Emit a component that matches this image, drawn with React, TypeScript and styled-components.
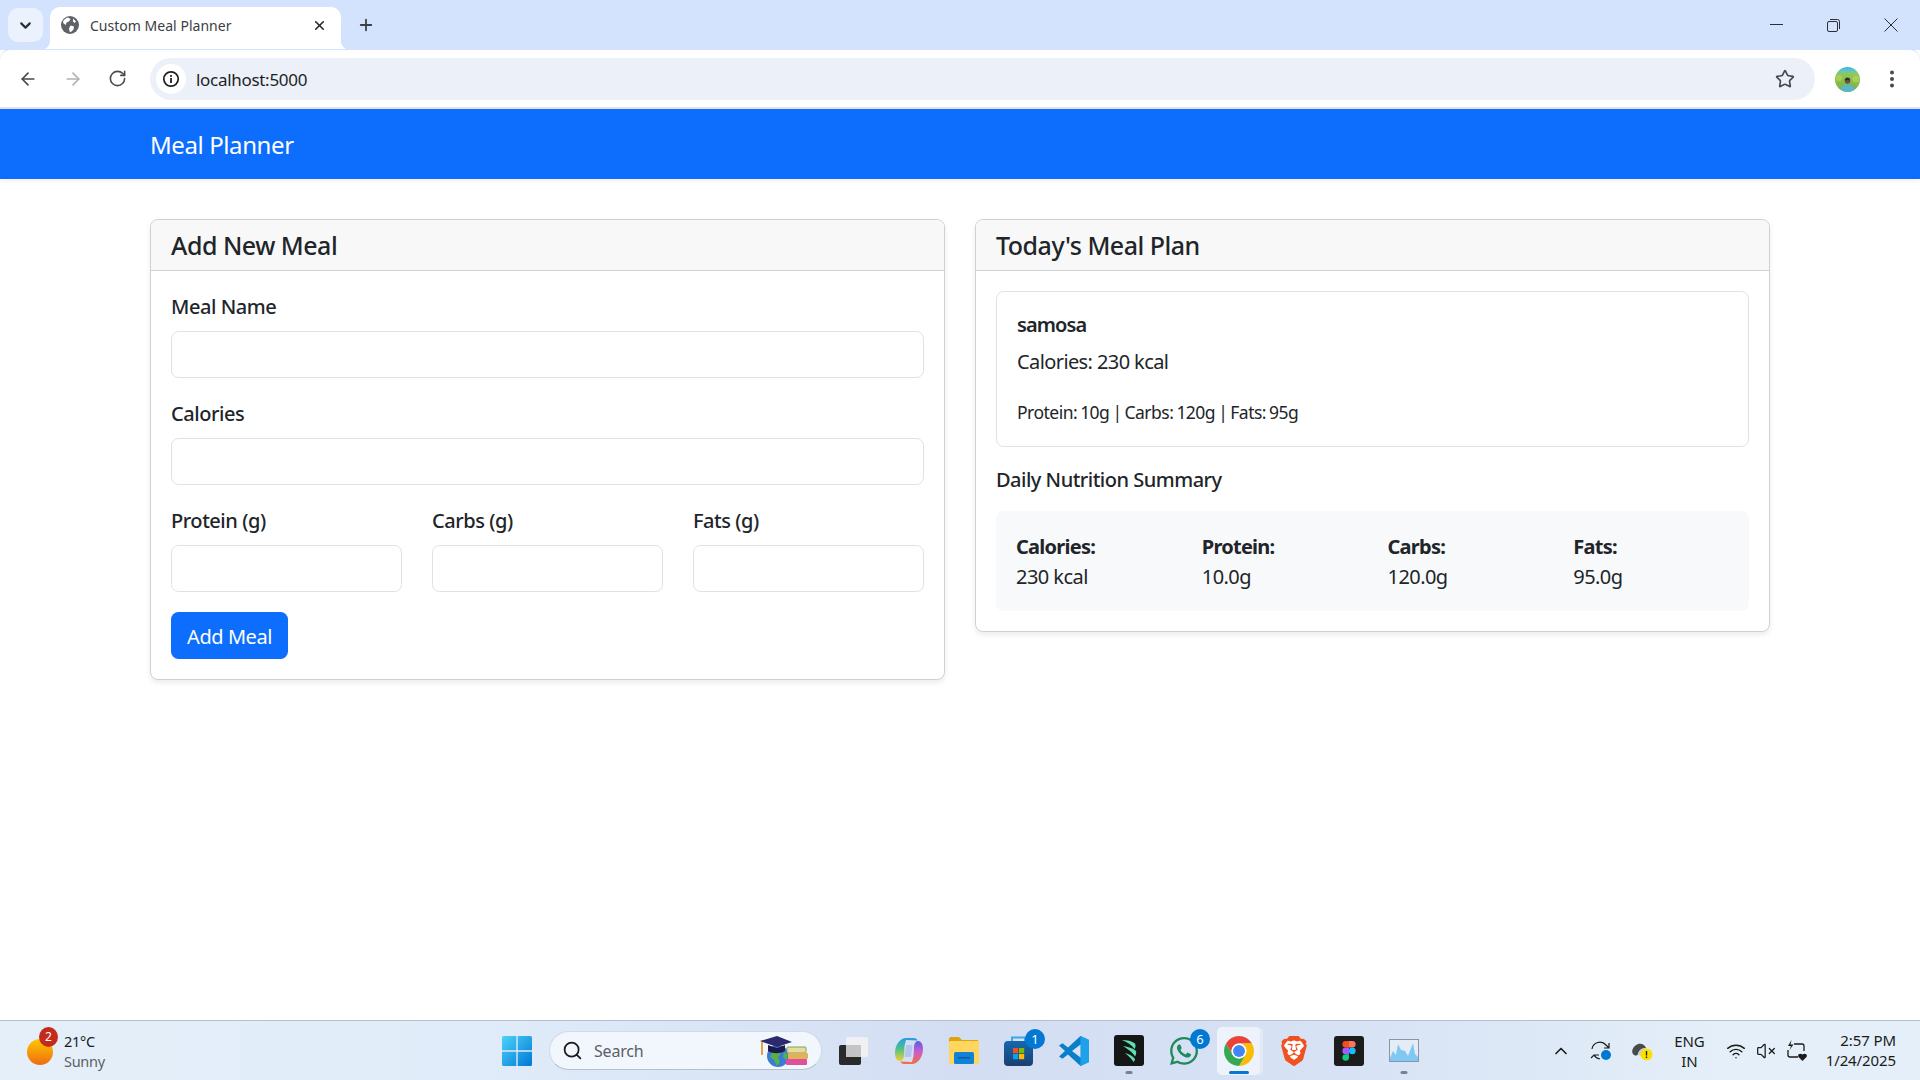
import React from "react";
import styled, { createGlobalStyle } from "styled-components";
import {
  ArrowLeft, ArrowRight, RotateCw, X, Plus, Star, ChevronDown, ChevronUp, Search, Wifi, VolumeX,
} from "lucide-react";
import { FaWhatsapp } from "react-icons/fa";
import { SiBrave } from "react-icons/si";

const FONT = `"Noto Sans", "Open Sans", sans-serif`;

const Global = createGlobalStyle`
  html, body { margin: 0; padding: 0; height: 100%; overflow: hidden; background: #fff; }
  #root { height: 100%; }
  * { box-sizing: border-box; }
  body { font-family: ${FONT}; color: #212529; }
`;

const Screen = styled.div`
  width: 1920px; height: 1080px; display: flex; flex-direction: column; overflow: hidden; background: #fff;
`;

/* ---------- browser chrome ---------- */
const TabStrip = styled.div`
  height: 50px; flex: none; display: flex; align-items: flex-end; background: #d3e3fd; padding-left: 8px;
`;
const TabListButton = styled.div`
  width: 35px; height: 34px; margin-bottom: 8px; border-radius: 10px; background: #ecf2fd; color: #2b2f33;
  display: flex; align-items: center; justify-content: center;
`;
const Tab = styled.div`
  position: relative; width: 291px; height: 43px; margin-left: 7px; background: #fff;
  border-radius: 10px 10px 0 0; display: flex; align-items: center; padding: 0 12px 7px 11px;
  &::before, &::after { content: ""; position: absolute; bottom: 0; width: 10px; height: 10px; }
  &::before { left: -10px; background: radial-gradient(circle at 0 0, transparent 10px, #fff 10.5px); }
  &::after { right: -10px; background: radial-gradient(circle at 100% 0, transparent 10px, #fff 10.5px); }
`;
const TabTitle = styled.span`
  flex: 1; margin-left: 11px; font-size: 14px; letter-spacing: 0.02px; color: #3c4043; white-space: nowrap;
`;
const TabClose = styled.span`display: flex; color: #26292c; margin-right: 2px;`;
const NewTab = styled.span`display: flex; margin: 0 0 8px 16px; height: 34px; align-items: center; color: #3c4043;`;
const WindowControls = styled.div`
  margin-left: auto; height: 50px; display: flex; align-items: center; padding-right: 22px; gap: 44px; color: #2b2f33;
`;
const Toolbar = styled.div`
  height: 59px; flex: none; background: #fff; border-radius: 10px 10px 0 0; border-bottom: 2px solid #e1e3e6;
  display: flex; align-items: center; padding: 1px 25px 0 18px; position: relative;
  box-shadow: 0 -1px 0 #d3e3fd;
`;
const NavIcons = styled.div`display: flex; gap: 25px; color: #474b4f; margin-right: 23px;`;
const Omnibox = styled.div`
  flex: 1; height: 42px; border-radius: 21px; background: #ebf0f9; display: flex; align-items: center; padding: 0 20px 0 6px;
`;
const InfoChip = styled.span`
  width: 30px; height: 30px; border-radius: 50%; background: #fff; display: flex; align-items: center; justify-content: center;
`;
const UrlText = styled.span`
  margin-left: 10px; font-size: 17px; letter-spacing: -0.3px; color: #1f1f1f; flex: 1;
`;
const ProfileArea = styled.div`display: flex; align-items: center; margin-left: 20px; gap: 29px;`;

/* ---------- app ---------- */
const Navbar = styled.nav`
  height: 70px; flex: none; background: #0d6efd; display: flex; align-items: center; padding: 0 150px;
  box-shadow: 0 2px 5px rgba(0,0,0,.06);
`;
const Brand = styled.span`font-size: 24px; color: #fff; letter-spacing: -0.4px;`;
const Main = styled.main`
  flex: 1; min-height: 0; padding: 40px 150px 0; display: grid; grid-template-columns: 1fr 1fr; gap: 30px; align-items: start;
`;
const Card = styled.section`
  border: 1px solid #cfd1d3; border-radius: 8px; background: #fff; box-shadow: 0 2.5px 5px rgba(0,0,0,.075); overflow: hidden;
`;
const CardHeader = styled.header`
  height: 51px; padding: 0 20px; background: #f8f8f8; border-bottom: 1px solid #cfd1d3; display: flex; align-items: center;
`;
const CardTitle = styled.h5`
  margin: 0; font-size: 25px; font-weight: 500; line-height: 30px; letter-spacing: -0.5px; color: #212529;
`;
const CardBody = styled.div`padding: 20px;`;
const Field = styled.div`margin-bottom: 20px;`;
const Label = styled.label`
  display: block; font-size: 20px; font-weight: 500; line-height: 30px; padding-top: 1px; height: 31px; margin-bottom: 9px; letter-spacing: -0.45px;
`;
const TextInput = styled.input`
  display: block; width: 100%; height: 47px; border: 1px solid #dee2e6; border-radius: 7.5px; background: #fff; padding: 0 15px; outline: none;
`;
const TripleRow = styled.div`display: grid; grid-template-columns: repeat(3, 1fr); gap: 30px; margin-bottom: 20px;`;
const PrimaryButton = styled.button`
  display: block; height: 47px; width: 117px; padding: 2px 0 0; border: 0; border-radius: 7.5px; background: #0d6efd; color: #fff;
  font-family: ${FONT}; font-size: 20px; letter-spacing: -0.45px;
`;
const MealItem = styled.article`
  border: 1px solid #dee2e6; border-radius: 7.5px; padding: 21px 20px 19px; margin-bottom: 20px;
`;
const MealName = styled.h6`margin: 0 0 10px; font-size: 20px; font-weight: 600; line-height: 24px; letter-spacing: -0.9px;`;
const MealLine = styled.p`margin: 0 0 20px; font-size: 20px; line-height: 30px; letter-spacing: -0.6px;`;
const MealMacros = styled.p`margin: 0; font-size: 17.5px; line-height: 30px; letter-spacing: -0.52px; word-spacing: -1px;`;
const SummaryTitle = styled.h6`margin: 0 0 20px; padding-top: 1px; height: 24px; font-size: 20px; font-weight: 500; line-height: 24px; letter-spacing: -0.5px;`;
const SummaryBox = styled.div`
  background: #f8f9fa; border-radius: 7.5px; padding: 21px 20px 19px; display: grid; grid-template-columns: repeat(4, 1fr); gap: 30px;
`;
const Stat = styled.div`font-size: 20px; line-height: 30px; letter-spacing: -0.55px;`;
const StatLabel = styled.strong`display: block; font-weight: 700; letter-spacing: -0.75px;`;

/* ---------- taskbar ---------- */
const Taskbar = styled.footer`
  height: 60px; flex: none; border-top: 1px solid #b6bfd0; display: flex; align-items: center; position: relative;
  background: linear-gradient(90deg, #e4eff9 0%, #e0ecf9 25%, #d3def3 50%, #d7e2f5 70%, #e4eff9 90%, #e4eff9 100%);
`;
const Weather = styled.div`width: 502px; flex: none; display: flex; align-items: center; padding-left: 27px;`;
const WeatherIcon = styled.div`position: relative; width: 26px; height: 26px; margin-top: 2px;`;
const WeatherBadge = styled.span`
  position: absolute; top: -12px; right: -5px; width: 19px; height: 20px; border-radius: 50%; background: #c42b1c; color: #fff;
  font-size: 12px; line-height: 20px; text-align: center;
`;
const WeatherText = styled.div`margin-left: 11px; font-size: 14.5px; line-height: 20px; color: #1b1b1b; letter-spacing: -0.3px;`;
const WeatherSub = styled.div`color: #5b5f66;`;
const StartCell = styled.div`width: 47px; flex: none; display: flex;`;
const SearchBox = styled.div`
  width: 273px; height: 39px; flex: none; border-radius: 20px; background: #f2f6fd; border: 1px solid #d3d9e6; border-bottom-color: #b6bfd0;
  display: flex; align-items: center; padding: 0 13px 0 12px; color: #1b1b1b;
`;
const SearchLabel = styled.span`flex: 1; margin-left: 11px; font-size: 16px; color: #5b5f66; letter-spacing: -0.2px;`;
const TaskIcons = styled.div`display: flex; margin-left: 4px;`;
const TaskCell = styled.div<{ $active?: boolean }>`
  position: relative; width: 55px; height: 48px; display: flex; align-items: center; justify-content: center;
  ${(p) => p.$active && `&::before { content: ""; position: absolute; left: 6px; top: 0; width: 43px; height: 48px; border-radius: 5px; background: #edf2fb; box-shadow: 3px 0 0 #e3e9f6; }`}
  & > * { position: relative; }
`;
const Running = styled.span<{ $active?: boolean }>`
  position: absolute; bottom: 1px; left: 50%; transform: translateX(-50%); height: 3px; border-radius: 2px;
  width: ${(p) => (p.$active ? 20 : 7)}px; background: ${(p) => (p.$active ? "#0078d4" : "#7d828a")};
`;
const Badge = styled.span`
  position: absolute !important; top: 2px; right: 1px; width: 20px; height: 20px; border-radius: 50%; background: #0078d4; color: #fff;
  font-size: 13px; line-height: 20px; text-align: center;
`;
const Tray = styled.div`
  margin-left: auto; display: flex; align-items: center; color: #1b1b1b; padding-right: 24px;
`;
const TrayIcons = styled.div`display: flex; align-items: center; gap: 19px; margin-right: 21.5px;`;
const TrayStatus = styled.div`display: flex; align-items: center; gap: 10px; margin: 0 19px 0 21px;`;
const Lang = styled.div`font-size: 15px; line-height: 20px; text-align: center; letter-spacing: -0.1px;`;
const Clock = styled.div`font-size: 15px; line-height: 20px; text-align: right; letter-spacing: -0.1px; margin-top: -1px;`;

/* ---------- drawn icons ---------- */
const Globe = () => (
  <svg width="18" height="18" viewBox="0 0 18 18">
    <circle cx="9" cy="9" r="9" fill="#5f6368" />
    <path d="M7 1.500 9.500 3 8 5.500 5.500 6.500 5 9 2.500 7.500 2 5.500C3 3.500 5 2 7 1.500ZM9.500 9.500 13 10.500 12.500 13.500 10 16 8.500 15.500 8 12.500ZM12 2.500l3 3-1.500 1.500L12 5.500Z" fill="#fff" />
  </svg>
);
const InfoGlyph = () => (
  <svg width="18" height="18" viewBox="0 0 18 18" fill="none">
    <circle cx="9" cy="9" r="7.200" stroke="#1f1f1f" strokeWidth="1.700" />
    <rect x="8.100" y="8" width="1.800" height="5" fill="#1f1f1f" />
    <rect x="8.100" y="5" width="1.800" height="1.800" fill="#1f1f1f" />
  </svg>
);
const Minimize = () => <svg width="13" height="13" viewBox="0 0 13 13"><path d="M0 5.500h13" stroke="#2b2f33" strokeWidth="1" /></svg>;
const Restore = () => (
  <svg width="13" height="13" viewBox="0 0 13 13" fill="none" stroke="#2b2f33">
    <rect x=".500" y="2.500" width="10" height="10" rx="1.500" />
    <path d="M3 .500h7.500a2 2 0 0 1 2 2V10" />
  </svg>
);
const CloseWin = () => <svg width="14" height="14" viewBox="0 0 14 14"><path d="M.500.500l13 13M13.500.500l-13 13" stroke="#2b2f33" /></svg>;
const Kebab = () => (
  <svg width="6" height="18" viewBox="0 0 6 18" fill="#474b4f">
    <circle cx="3" cy="2.500" r="2" /><circle cx="3" cy="9" r="2" /><circle cx="3" cy="15.500" r="2" />
  </svg>
);
const Avatar = () => (
  <svg width="25" height="25" viewBox="0 0 25 25">
    <defs>
      <clipPath id="av"><circle cx="12.500" cy="12.500" r="12.500" /></clipPath>
      <linearGradient id="avg" x1="0" y1="0" x2="0" y2="1"><stop offset="0" stopColor="#3fb4ea" /><stop offset=".18" stopColor="#6cc6b4" /><stop offset=".3" stopColor="#93c84e" /><stop offset="1" stopColor="#79ad42" /></linearGradient>
    </defs>
    <g clipPath="url(#av)">
      <rect width="25" height="25" fill="url(#avg)" />
      <circle cx="4" cy="11" r="3" fill="#a9cf5a" /><circle cx="21" cy="12" r="3.500" fill="#a9cf5a" />
      <path d="M5 25c.500-5 3-7.500 7.500-7.500s7.500 2.500 8 7.500Z" fill="#5cb6c8" />
      <circle cx="12.500" cy="14" r="2.700" fill="#6b4f3f" />
      <path d="M9.700 13.500c0-2 1.300-3 2.800-3s2.800 1 2.800 3c-1.800-.800-3.800-.800-5.600 0Z" fill="#26303a" />
    </g>
  </svg>
);
const WeatherSun = () => (
  <svg width="26" height="26" viewBox="0 0 26 26">
    <defs><linearGradient id="sun" x1="0" y1="0" x2="0" y2="1"><stop offset="0" stopColor="#ffc800" /><stop offset="1" stopColor="#ee6c10" /></linearGradient></defs>
    <circle cx="13" cy="13" r="13" fill="url(#sun)" />
  </svg>
);
const WinLogo = () => (
  <svg width="30" height="30" viewBox="0 0 30 30">
    <defs><linearGradient id="win" x1="0" y1="0" x2="1" y2="1"><stop offset="0" stopColor="#4ed2fa" /><stop offset="1" stopColor="#0078d4" /></linearGradient></defs>
    <path d="M0 1.500A1.500 1.500 0 0 1 1.500 0h12.800v14.300H0ZM15.700 0h12.800A1.500 1.500 0 0 1 30 1.500v12.800H15.700ZM0 15.700h14.300V30H1.500A1.500 1.500 0 0 1 0 28.500ZM15.700 15.700H30v12.800a1.500 1.500 0 0 1-1.500 1.500H15.700Z" fill="url(#win)" />
  </svg>
);
const EduIcon = () => (
  <svg width="48" height="36" viewBox="0 0 48 36">
    <circle cx="18" cy="23" r="11" fill="#3b7bd8" />
    <path d="M13 17l6-1 2 4-3 4 2 5-3 4-3-6-4-3ZM24 19l4 3-2 5-3-3Z" fill="#58b04a" />
    <path d="M8 12v6c5 3 12 3 17 0v-6l-8 3Z" fill="#1c1a4a" />
    <path d="M0 8 17 3 32 9 17 14Z" fill="#2c2a6c" />
    <path d="M2 9v13" stroke="#e8a33a" strokeWidth="2" />
    <rect x="27" y="14" width="19" height="6" rx="1" fill="#eadb9a" stroke="#7aa36a" />
    <rect x="28" y="20" width="20" height="6" rx="1" fill="#e0b25a" />
    <rect x="26" y="26" width="21" height="6" rx="1" fill="#e04f9a" />
  </svg>
);
const TaskView = () => (
  <svg width="29" height="28" viewBox="0 0 29 28">
    <rect x="0" y="8" width="22" height="20" rx="2" fill="#2a2a2a" />
    <rect x="7" y="0" width="22" height="20" rx="2" fill="#f0f0f2" />
    <rect x="7" y="8" width="15" height="12" fill="#c4c4c6" />
  </svg>
);
const Copilot = () => (
  <svg width="28" height="28" viewBox="0 0 28 28">
    <defs>
      <linearGradient id="cpa" x1="0" y1="0" x2="0" y2="1"><stop offset="0" stopColor="#2b9ae8" /><stop offset=".45" stopColor="#49c08a" /><stop offset="1" stopColor="#f4cf30" /></linearGradient>
      <linearGradient id="cpb" x1="0" y1="0" x2="0" y2="1"><stop offset="0" stopColor="#5a5be6" /><stop offset=".45" stopColor="#c75ed0" /><stop offset="1" stopColor="#f4703c" /></linearGradient>
    </defs>
    <path d="M11 1h8c2 0 3 1 3.500 2.500L11 3c-.500 2-1 4-1.500 6L9 19c-.500 3-2 5-4 5-3 0-5-3-5-8C0 8 5 1 11 1Z" fill="url(#cpa)" />
    <path d="M17 27H9c-2 0-3-1-3.500-2.500L17 25c.500-2 1-4 1.500-6L19 9c.500-3 2-5 4-5 3 0 5 3 5 8 0 8-5 15-11 15Z" fill="url(#cpb)" />
    <path d="M11 8h6.500l-1.500 12H9.500Z" fill="#9db6e6" opacity=".6" />
  </svg>
);
const Folder = () => (
  <svg width="30" height="27" viewBox="0 0 30 27">
    <path d="M0 2a2 2 0 0 1 2-2h8l3 3h16v4H0Z" fill="#e0a30e" />
    <rect y="4" width="30" height="23" rx="1.500" fill="#ffd75e" />
    <rect x="5" y="15" width="20" height="12" rx="1.500" fill="#1282d6" />
    <rect x="9" y="20" width="12" height="1.500" fill="#0a5aa0" />
  </svg>
);
const Store = () => (
  <svg width="29" height="30" viewBox="0 0 29 30">
    <defs><linearGradient id="st" x1="0" y1="0" x2="0" y2="1"><stop offset="0" stopColor="#1568b0" /><stop offset="1" stopColor="#1c3f70" /></linearGradient></defs>
    <path d="M8 6V1.500h13V6" fill="none" stroke="#35a9e8" strokeWidth="2" />
    <rect y="5" width="29" height="25" rx="4" fill="url(#st)" />
    <rect x="9" y="12" width="5.200" height="5.200" fill="#f25022" /><rect x="15" y="12" width="5.200" height="5.200" fill="#7fba00" />
    <rect x="9" y="18" width="5.200" height="5.200" fill="#00a4ef" /><rect x="15" y="18" width="5.200" height="5.200" fill="#ffb900" />
  </svg>
);
const VSCode = () => (
  <svg width="30" height="30" viewBox="0 0 30 30">
    <path d="M21.500 0 30 4v22l-8.500 4L9 18.500l-5.500 4.200L0 20.500 6 15 0 9.500l3.500-2.200L9 11.500Z" fill="#0a7fc9" />
    <path d="M21.500 0 30 4v22l-8.500 4Z" fill="#1fa0ea" />
    <path d="M21.500 8.500 13 15l8.500 6.500Z" fill="#d9e3f4" />
  </svg>
);
const DarkApp = () => (
  <svg width="30" height="31" viewBox="0 0 30 31">
    <rect width="30" height="31" rx="3" fill="#141716" />
    <path d="M8 5c5 0 10 1 13 3.500 1 2 .500 4-.500 5.500C18 10 13 7 8 5ZM9 11c5 1 10 2 13 5 .500 2 0 4-1 5.500-2-4-7-7-12-10.500ZM11 18c4 1 8 3 10 6 0 1-.500 2-1.500 3-1.500-3-5-6-8.500-9Z" fill="#5fe0b0" />
  </svg>
);
const Chrome = () => (
  <svg width="30" height="30" viewBox="0 0 48 48">
    <path d="M3.220 12A24 24 0 0 1 44.780 12L24 12A12 12 0 0 0 13.610 30Z" fill="#ea4335" />
    <path d="M44.780 12A24 24 0 0 1 24 48L34.390 30A12 12 0 0 0 24 12Z" fill="#fbbc04" />
    <path d="M24 48A24 24 0 0 1 3.220 12L13.610 30A12 12 0 0 0 34.390 30Z" fill="#34a853" />
    <circle cx="24" cy="24" r="12" fill="#fff" />
    <circle cx="24" cy="24" r="9.500" fill="#4285f4" />
  </svg>
);
const BraveWrap = styled.span`position: relative; display: flex;`;
const BraveBack = styled.svg`position: absolute; left: 2px; top: 0;`;
const BraveGlyph = styled(SiBrave)`position: relative;`;
const BraveIcon = () => (
  <BraveWrap>
    <BraveBack width="26" height="30" viewBox="0 0 26 30"><path d="M4 3h18l2 5-1 10-10 11L3 18 2 8Z" fill="#fff" /></BraveBack>
    <BraveGlyph size={30} color="#f1501f" />
  </BraveWrap>
);
const Figma = () => (
  <svg width="30" height="30" viewBox="0 0 30 30">
    <rect width="30" height="30" rx="3" fill="#1c1c1c" />
    <path d="M15 5H11.700a3.300 3.300 0 0 0 0 6.600H15Z" fill="#f24e1e" />
    <path d="M15 5h3.300a3.300 3.300 0 0 1 0 6.600H15Z" fill="#ff7262" />
    <path d="M15 11.600H11.700a3.300 3.300 0 0 0 0 6.600H15Z" fill="#a259ff" />
    <circle cx="18.300" cy="14.900" r="3.300" fill="#1abcfe" />
    <path d="M15 18.200H11.700a3.300 3.300 0 1 0 3.300 3.300Z" fill="#0acf83" />
  </svg>
);
const Monitor = () => (
  <svg width="30" height="23" viewBox="0 0 30 23">
    <rect x=".500" y=".500" width="29" height="22" fill="#e4ecf6" stroke="#8d959f" />
    <path d="M1 19 4 12 7 16 9 5 12 11 16 12 19 17 24 4 26 15 29 18V22H1Z" fill="#7fc8f4" />
  </svg>
);
const SyncDot = () => (
  <svg width="22" height="22" viewBox="0 0 22 22" fill="none">
    <path d="M2 9a8 8 0 0 1 14-4l3 3M19 3v5h-5M1 18l3-3h5M4 15a8 8 0 0 0 6 4" stroke="#1b1b1b" strokeWidth="1.200" />
    <circle cx="16" cy="15" r="5" fill="#0078d4" />
  </svg>
);
const CloudWarn = () => (
  <svg width="22" height="20" viewBox="0 0 22 20">
    <path d="M2 13c-2-3 0-8 5-10 4-1 7 1 8 4-4 0-7 2-8 6-1 2-3 2-5 0Z" fill="#4a4a4a" />
    <path d="M7 13c1-4 4-6 8-6 1 1 1 2 1 3l-5 5c-2 0-3-1-4-2Z" fill="#c9cdd3" />
    <circle cx="15.500" cy="13.500" r="6" fill="#fce100" />
    <rect x="14.800" y="10" width="1.400" height="4.500" fill="#222" /><rect x="14.800" y="15.500" width="1.400" height="1.500" fill="#222" />
  </svg>
);
const BatteryHeart = () => (
  <svg width="21" height="21" viewBox="0 0 21 21" fill="none">
    <path d="M8 4h8a2 2 0 0 1 2 2v5M2 10v5a2 2 0 0 0 2 2h8" stroke="#1b1b1b" strokeWidth="1.300" />
    <path d="M5.500 0 2 6h3L3.500 10 7.500 4.500h-3Z" fill="#1b1b1b" />
    <path d="M16.500 21l-4-4c-1.500-2 1.200-4.500 4-2.500 2.800-2 5.500.500 4 2.500Z" fill="#1b1b1b" />
  </svg>
);

const tasks = [
  { key: "view", icon: <TaskView /> },
  { key: "copilot", icon: <Copilot /> },
  { key: "folder", icon: <Folder /> },
  { key: "store", icon: <Store />, badge: "1" },
  { key: "code", icon: <VSCode /> },
  { key: "dark", icon: <DarkApp />, running: true },
  { key: "wa", icon: <FaWhatsapp size={32} color="#1f8a5b" />, badge: "6" },
  { key: "chrome", icon: <Chrome />, active: true },
  { key: "brave", icon: <BraveIcon /> },
  { key: "figma", icon: <Figma /> },
  { key: "mon", icon: <Monitor />, running: true },
];

const stats = [
  ["Calories:", "230 kcal"],
  ["Protein:", "10.0g"],
  ["Carbs:", "120.0g"],
  ["Fats:", "95.0g"],
];

export default function App() {
  return (
    <Screen>
      <Global />
      <TabStrip>
        <TabListButton><ChevronDown size={17} strokeWidth={3} /></TabListButton>
        <Tab>
          <Globe />
          <TabTitle>Custom Meal Planner</TabTitle>
          <TabClose><X size={15} strokeWidth={2.6} /></TabClose>
        </Tab>
        <NewTab><Plus size={18} strokeWidth={2.4} /></NewTab>
        <WindowControls><Minimize /><Restore /><CloseWin /></WindowControls>
      </TabStrip>
      <Toolbar>
        <NavIcons>
          <ArrowLeft size={20} strokeWidth={2} />
          <ArrowRight size={20} strokeWidth={2} color="#b0b3b6" />
          <RotateCw size={19} strokeWidth={2} />
        </NavIcons>
        <Omnibox>
          <InfoChip><InfoGlyph /></InfoChip>
          <UrlText>localhost:5000</UrlText>
          <Star size={20} strokeWidth={2} color="#474b4f" />
        </Omnibox>
        <ProfileArea><Avatar /><Kebab /></ProfileArea>
      </Toolbar>

      <Navbar><Brand>Meal Planner</Brand></Navbar>

      <Main>
        <Card>
          <CardHeader><CardTitle>Add New Meal</CardTitle></CardHeader>
          <CardBody>
            <Field><Label>Meal Name</Label><TextInput /></Field>
            <Field><Label>Calories</Label><TextInput /></Field>
            <TripleRow>
              <div><Label>Protein (g)</Label><TextInput /></div>
              <div><Label>Carbs (g)</Label><TextInput /></div>
              <div><Label>Fats (g)</Label><TextInput /></div>
            </TripleRow>
            <PrimaryButton>Add Meal</PrimaryButton>
          </CardBody>
        </Card>
        <Card>
          <CardHeader><CardTitle>Today's Meal Plan</CardTitle></CardHeader>
          <CardBody>
            <MealItem>
              <MealName>samosa</MealName>
              <MealLine>Calories: 230 kcal</MealLine>
              <MealMacros>Protein: 10g | Carbs: 120g | Fats: 95g</MealMacros>
            </MealItem>
            <SummaryTitle>Daily Nutrition Summary</SummaryTitle>
            <SummaryBox>
              {stats.map(([k, v]) => (
                <Stat key={k}><StatLabel>{k}</StatLabel>{v}</Stat>
              ))}
            </SummaryBox>
          </CardBody>
        </Card>
      </Main>

      <Taskbar>
        <Weather>
          <WeatherIcon><WeatherSun /><WeatherBadge>2</WeatherBadge></WeatherIcon>
          <WeatherText>21°C<WeatherSub>Sunny</WeatherSub></WeatherText>
        </Weather>
        <StartCell><WinLogo /></StartCell>
        <SearchBox>
          <Search size={21} strokeWidth={2} />
          <SearchLabel>Search</SearchLabel>
          <EduIcon />
        </SearchBox>
        <TaskIcons>
          {tasks.map((t) => (
            <TaskCell key={t.key} $active={t.active}>
              {t.icon}
              {t.badge && <Badge>{t.badge}</Badge>}
              {(t.running || t.active) && <Running $active={t.active} />}
            </TaskCell>
          ))}
        </TaskIcons>
        <Tray>
          <TrayIcons>
            <ChevronUp size={20} strokeWidth={2} />
            <SyncDot />
            <CloudWarn />
          </TrayIcons>
          <Lang>ENG<br />IN</Lang>
          <TrayStatus>
            <Wifi size={20} strokeWidth={1.7} />
            <VolumeX size={20} strokeWidth={1.5} />
            <BatteryHeart />
          </TrayStatus>
          <Clock>2:57 PM<br />1/24/2025</Clock>
        </Tray>
      </Taskbar>
    </Screen>
  );
}
